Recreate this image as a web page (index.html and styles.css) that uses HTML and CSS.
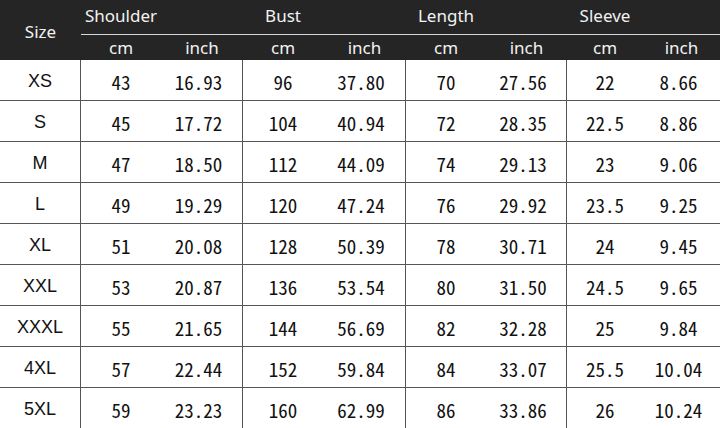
FILE: index.html
```html
<!DOCTYPE html>
<html>
<head>
<meta charset="utf-8">
<link rel="stylesheet" href="styles.css">
</head>
<body>
<div class="chart">
  <div class="hd size-h">Size</div>
  <div class="hd grp">Shoulder</div><div class="hd grp"></div>
  <div class="hd grp">Bust</div><div class="hd grp"></div>
  <div class="hd grp">Length</div><div class="hd grp"></div>
  <div class="hd grp">Sleeve</div><div class="hd grp"></div>
  <div class="hd sub">cm</div><div class="hd sub">inch</div>
  <div class="hd sub">cm</div><div class="hd sub">inch</div>
  <div class="hd sub">cm</div><div class="hd sub">inch</div>
  <div class="hd sub">cm</div><div class="hd sub">inch</div>

  <div class="c sz">XS</div><div class="c n">43</div><div class="c n in sep">16.93</div><div class="c n">96</div><div class="c n in sep">37.80</div><div class="c n">70</div><div class="c n in sep">27.56</div><div class="c n">22</div><div class="c n in">8.66</div>
  <div class="c sz">S</div><div class="c n">45</div><div class="c n in sep">17.72</div><div class="c n">104</div><div class="c n in sep">40.94</div><div class="c n">72</div><div class="c n in sep">28.35</div><div class="c n">22.5</div><div class="c n in">8.86</div>
  <div class="c sz">M</div><div class="c n">47</div><div class="c n in sep">18.50</div><div class="c n">112</div><div class="c n in sep">44.09</div><div class="c n">74</div><div class="c n in sep">29.13</div><div class="c n">23</div><div class="c n in">9.06</div>
  <div class="c sz">L</div><div class="c n">49</div><div class="c n in sep">19.29</div><div class="c n">120</div><div class="c n in sep">47.24</div><div class="c n">76</div><div class="c n in sep">29.92</div><div class="c n">23.5</div><div class="c n in">9.25</div>
  <div class="c sz">XL</div><div class="c n">51</div><div class="c n in sep">20.08</div><div class="c n">128</div><div class="c n in sep">50.39</div><div class="c n">78</div><div class="c n in sep">30.71</div><div class="c n">24</div><div class="c n in">9.45</div>
  <div class="c sz">XXL</div><div class="c n">53</div><div class="c n in sep">20.87</div><div class="c n">136</div><div class="c n in sep">53.54</div><div class="c n">80</div><div class="c n in sep">31.50</div><div class="c n">24.5</div><div class="c n in">9.65</div>
  <div class="c sz">XXXL</div><div class="c n">55</div><div class="c n in sep">21.65</div><div class="c n">144</div><div class="c n in sep">56.69</div><div class="c n">82</div><div class="c n in sep">32.28</div><div class="c n">25</div><div class="c n in">9.84</div>
  <div class="c sz">4XL</div><div class="c n">57</div><div class="c n in sep">22.44</div><div class="c n">152</div><div class="c n in sep">59.84</div><div class="c n">84</div><div class="c n in sep">33.07</div><div class="c n">25.5</div><div class="c n in">10.04</div>
  <div class="c sz">5XL</div><div class="c n">59</div><div class="c n in sep">23.23</div><div class="c n">160</div><div class="c n in sep">62.99</div><div class="c n">86</div><div class="c n in sep">33.86</div><div class="c n">26</div><div class="c n in">10.24</div>
</div>
</body>
</html>
```
FILE: styles.css
```css
html, body {
  margin: 0;
  padding: 0;
  background: #ffffff;
}
.chart {
  width: 720px;
  display: grid;
  grid-template-columns: 81px 80px 82px 80px 83px 80px 81px 76px 77px;
  grid-template-rows: 35px 25px repeat(9, 41px);
}
.hd {
  background: #252525;
  color: #f2f2f2;
  font-family: "Noto Sans", "Open Sans", sans-serif;
  font-size: 17px;
  display: flex;
  align-items: center;
  justify-content: center;
  box-sizing: border-box;
}
.size-h {
  grid-row: 1 / span 2;
  padding-top: 2px;
}
.grp {
  border-bottom: 1px solid #d8d8d8;
  padding-bottom: 3px;
}
.sub {
  padding-bottom: 1px;
}
.c {
  box-sizing: border-box;
  border-bottom: 1px solid #555;
  display: flex;
  align-items: center;
  justify-content: center;
  color: #111;
  padding-top: 3px;
}
.sz {
  border-right: 1px solid #555;
  font-family: "Liberation Sans", Arial, sans-serif;
  font-size: 18px;
}
.n {
  font-family: "Noto Sans Mono CJK SC", "Liberation Mono", monospace;
  font-size: 19px;
}
.in {
  padding-right: 6px;
}
.sep {
  border-right: 1px solid #555;
}
```
